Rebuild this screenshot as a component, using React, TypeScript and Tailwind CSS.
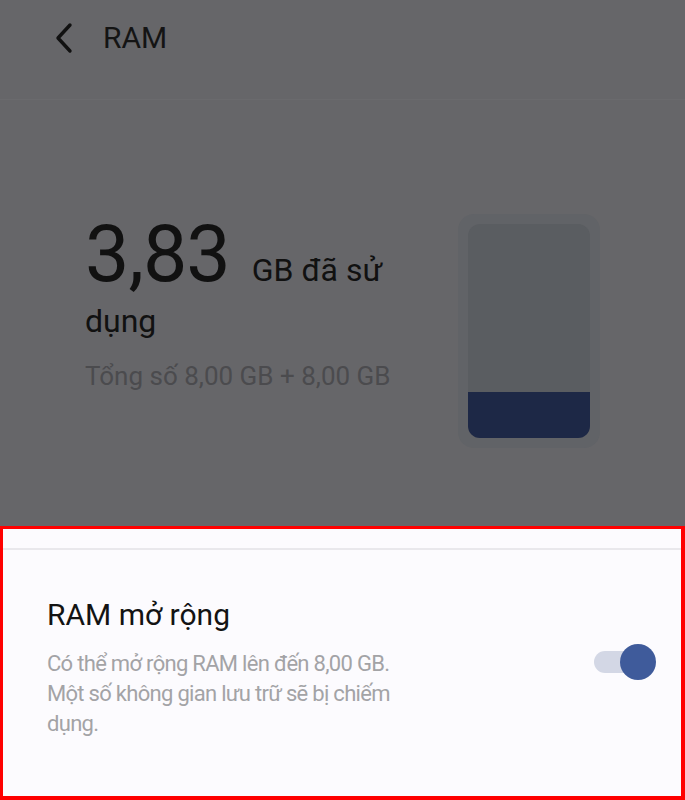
export default function App() {
  return (
    <div className="w-[685px] h-[800px] bg-[#666669] flex flex-col overflow-hidden [font-family:Roboto,'Noto_Sans',sans-serif]">
      {/* header */}
      <div className="h-[100px] shrink-0 flex items-center pb-[24px] pl-[53px] border-b border-[#6a6a6d]">
        <svg width="22" height="32" viewBox="0 0 22 32" fill="none">
          <path d="M17 3 L5 16 L17 29" stroke="#111" strokeWidth="3.4" strokeLinecap="round" strokeLinejoin="round" />
        </svg>
        <span className="ml-[28px] text-[30px] text-[#141414] leading-none">RAM</span>
      </div>

      {/* usage summary */}
      <div className="flex-1 flex justify-between pl-[85px] pr-[85px] pt-[107px]">
        <div className="w-[330px] text-[#111]">
          <div className="flex items-baseline">
            <span className="text-[79px] leading-[94px] tracking-[-1px]">3,83</span>
            <span className="ml-[22px] text-[32px] leading-[40px]">GB đã sử</span>
          </div>
          <div className="text-[32px] leading-[40px]">dụng</div>
          <div className="mt-[20px] text-[26px] text-[#4b4b4e] leading-[30px]">Tổng số 8,00 GB + 8,00 GB</div>
        </div>
        <div className="mt-[7px] w-[142px] h-[234px] rounded-[16px] bg-[#616367] p-[10px] flex flex-col">
          <div className="flex-1 rounded-[12px] bg-[#5a5d61] flex flex-col justify-end overflow-hidden">
            <div className="h-[46px] bg-[#1d2846]" />
          </div>
        </div>
      </div>

      {/* expanded RAM panel */}
      <div className="h-[274px] shrink-0 bg-[#fcfbfe] border-[#ff0000] border-t-[3px] border-l-[3px] border-r-[4px] border-b-[4px] flex flex-col">
        <div className="mt-[19px] h-[2px] bg-[#e9e8ec]" />
        <div className="flex items-start justify-between pl-[44px] pr-[25px] pt-[50px]">
          <div>
            <div className="text-[30px] leading-none text-[#131313]">RAM mở rộng</div>
            <div className="mt-[19px] w-[380px] text-[22px] leading-[30px] text-[#a3a3a6] tracking-[-0.7px]">
              Có thể mở rộng RAM lên đến 8,00 GB. Một số không gian lưu trữ sẽ bị chiếm dụng.
            </div>
          </div>
          <div className="mt-[44px] relative w-[62px] h-[36px] flex items-center">
            <div className="w-[54px] h-[22px] rounded-full bg-[#d3d7e5]" />
            <div className="absolute right-0 top-0 w-[36px] h-[36px] rounded-full bg-[#3f5b9b]" />
          </div>
        </div>
      </div>
    </div>
  );
}
